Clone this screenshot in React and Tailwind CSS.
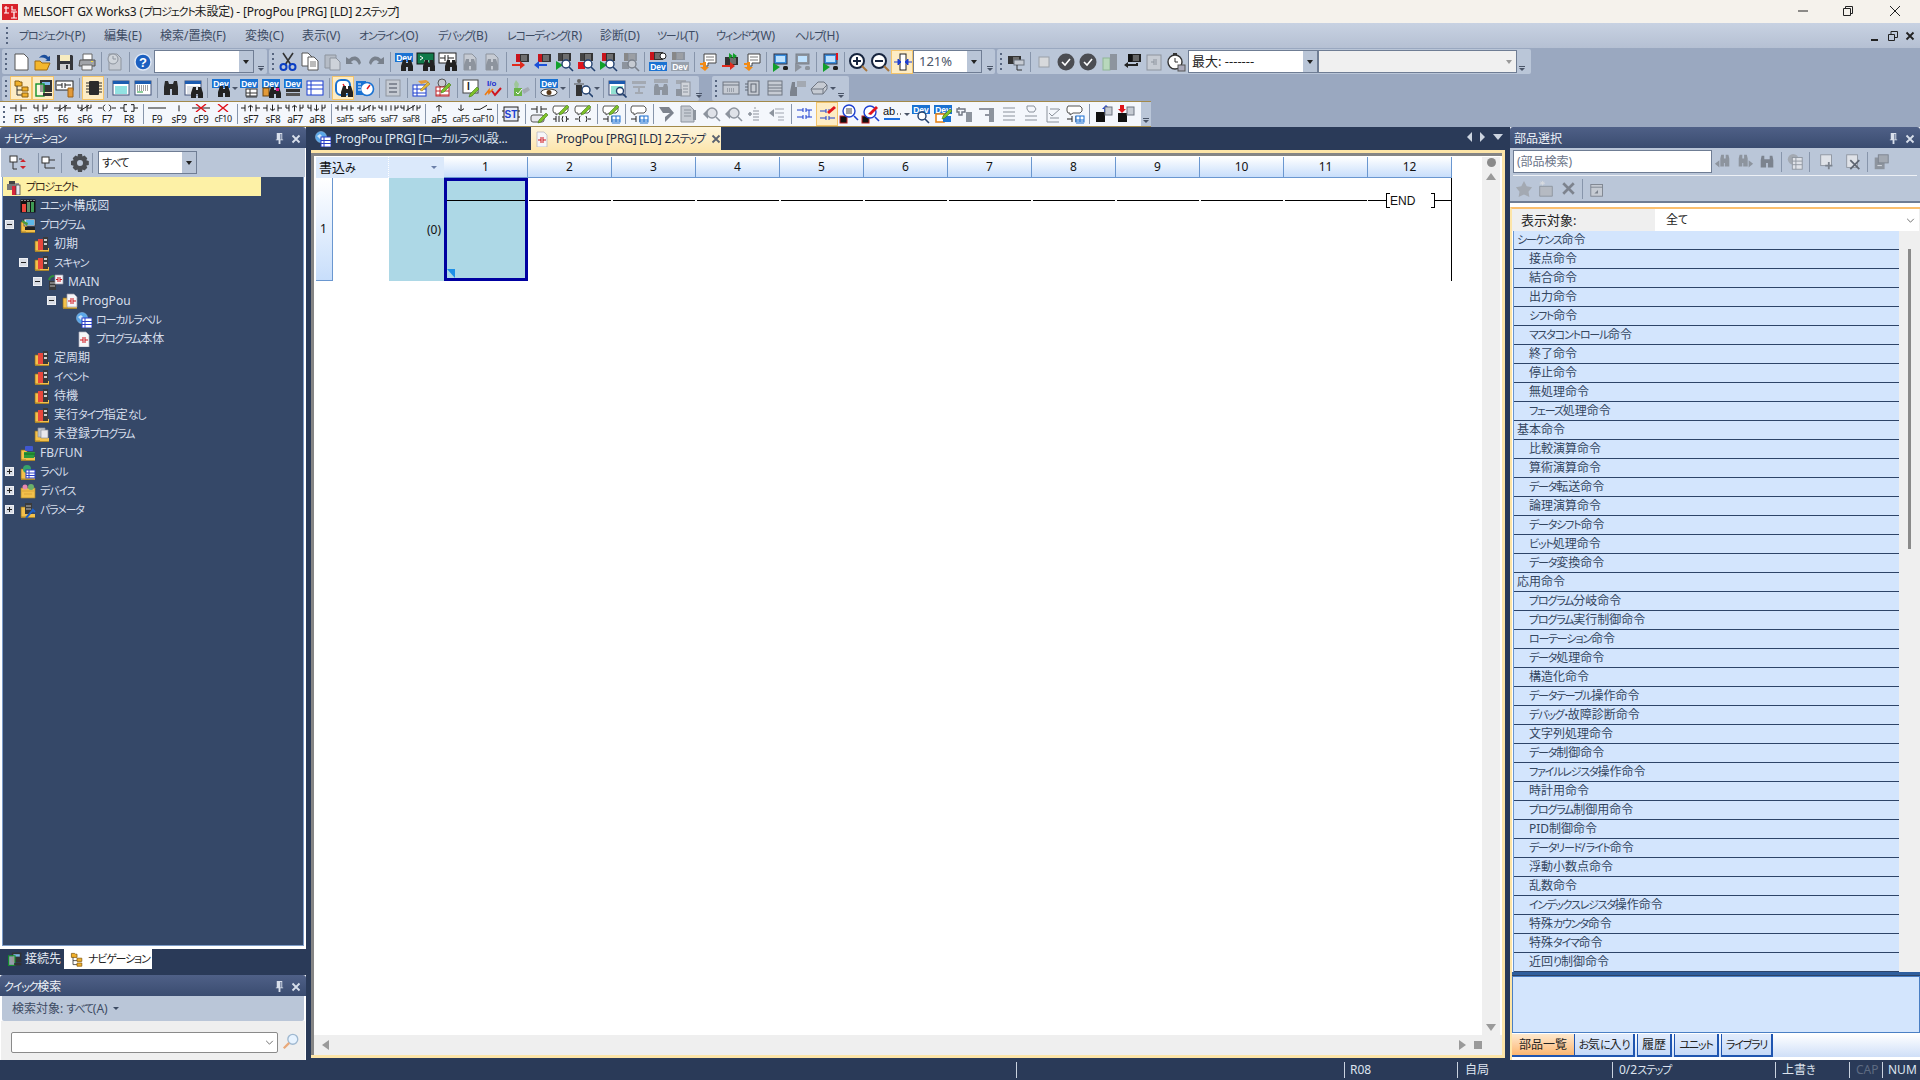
import React from "react";

const svgText = { fontFamily: "Liberation Sans, sans-serif", fontWeight: 700 };

// kana in the reference font is much narrower than in Noto, so squeeze those runs
const J = ({ children }) =>
  String(children)
    .split(/([\u3040-\u30ff]+)/)
    .map((p, i) =>
      i % 2 ? (
        <span key={i} className="text-[11px] tracking-[-1.2px]">
          {p}
        </span>
      ) : (
        p
      )
    );

// small building blocks for the 20x20 toolbar drawings
const Page = ({ x = 4, y = 2, w = 12, h = 16, s = "#555", f = "#fff" }) => (
  <path d={`M${x} ${y}h${w - 4}l4 4v${h - 4}h-${w}z`} fill={f} stroke={s} />
);
const Bino = ({ x = 0, y = 0, c = "#222" }) => (
  <g transform={`translate(${x} ${y})`}>
    <path d="M0 6L2 0h3v3h2V0h3l2 6v5H7V7H5v4H0z" fill={c} />
  </g>
);
const DevBox = ({ x = 1, y = 1, c = "#1a72d2", w = 18 }) => (
  <g>
    <rect x={x} y={y} width={w} height="9" fill={c} />
    <text x={x + w / 2} y={y + 7.5} fontSize="8.5" fill="#fff" textAnchor="middle" style={svgText}>Dev</text>
  </g>
);
const Rack = ({ x = 4, y = 2, c = "#c8141c", b = "#333" }) => (
  <g>
    <rect x={x} y={y} width="13" height="8" fill={b} />
    <rect x={x} y={y} width="4" height="8" fill={c} />
    <path d={`M${x + 6} ${y + 1}v6M${x + 8} ${y + 1}v6M${x + 10} ${y + 1}v6`} stroke="#aaa" />
  </g>
);
const Mag = ({ x = 11, y = 11, r = 4, s = "#22406e", f = "#fff" }) => (
  <g>
    <circle cx={x} cy={y} r={r} fill={f} stroke={s} strokeWidth="1.4" />
    <path d={`M${x + r - 1} ${y + r - 1}l4 4`} stroke={s} strokeWidth="1.6" />
  </g>
);
const ArrowR = ({ x = 2, y = 12, c = "#e02a1c" }) => (
  <path transform={`translate(${x} ${y})`} d="M0 1h8V-2l5 4-5 4V3H0z" fill={c} />
);
const ArrowL = ({ x = 2, y = 12, c = "#1a50d8" }) => (
  <path transform={`translate(${x} ${y})`} d="M13 1H5V-2L0 2l5 4V3h8z" fill={c} />
);
const PlayG = ({ x = 2, y = 10, c = "#12a02a" }) => <path d={`M${x} ${y}l7 4-7 5z`} fill={c} />;
const Win = ({ s = "#1c5cb0", lines = "#25c4c4" }) => (
  <g>
    <rect x="2" y="3" width="16" height="14" fill="#fff" stroke="#44557a" />
    <rect x="2" y="3" width="16" height="3" fill={s} />
    <path d="M4 9h12M4 11h12M4 13h12M4 15h12" stroke={lines} />
  </g>
);
const Monitor = ({ c = "#3a8fe0", s = "#334" }) => (
  <g>
    <rect x="4" y="2" width="13" height="10" fill={c} stroke={s} />
    <rect x="6" y="4" width="9" height="6" fill="#bfe2ff" />
  </g>
);
const Table = ({ x = 3, y = 4, w = 14, h = 12, c = "#1c3fd0" }) => (
  <g>
    <rect x={x} y={y} width={w} height={h} fill="#fff" stroke={c} />
    <path d={`M${x} ${y + 4}h${w}M${x} ${y + 8}h${w}M${x + 4} ${y}v${h}`} stroke={c} />
  </g>
);
const Pencil = ({ x = 8, y = 10 }) => (
  <path transform={`translate(${x} ${y})`} d="M0 6L7-1l2 2-7 7-3 1z" fill="#7fc12a" stroke="#3e7a12" strokeWidth=".6" />
);
const Bubble = ({ s = "#555" }) => <path d="M3 2h12l2 2v3l-2 2H8l-3 2V9H3L2 7V4z" fill="#fff" stroke={s} />;
const Contact = ({ y = 14, s = "#222" }) => (
  <path d={`M2 ${y}h5M7 ${y - 3}v6M11 ${y - 3}v6M11 ${y}h5`} stroke={s} fill="none" />
);
const GrayPage = () => <Page s="#8d949e" f="#c6cbd3" />;
const Dash = ({ s = "#8a919b" }) => <path d="M4 4h12M4 8h12M4 12h12M4 16h12" stroke={s} fill="none" />;

const icons = {
  new: <Page x={4} y={2} w={13} h={16} />,
  open: (
    <g>
      <path d="M2 9h5l2 2h8l-3 7H2z" fill="#f4b72e" stroke="#a06a10" />
      <path d="M6 6c3-4 7-4 9-1l2-1v5h-5l2-1c-1-2-4-3-8-2z" fill="#1c4f9c" />
    </g>
  ),
  save: (
    <g>
      <path d="M2 3h15l1 1v14H2z" fill="#35363a" />
      <rect x="5" y="3" width="10" height="6" fill="#f7ecc0" />
      <rect x="5" y="12" width="10" height="6" fill="#cfcfcf" />
      <rect x="11" y="13" width="2" height="4" fill="#35363a" />
    </g>
  ),
  print: (
    <g>
      <path d="M6 2h9v6H6z" fill="#fff" stroke="#666" />
      <path d="M3 8h15v6H2z" fill="#a2a4a8" stroke="#555" />
      <path d="M5 13h10v5H5z" fill="#f4f4f4" stroke="#666" />
      <rect x="14" y="9" width="2" height="1" fill="#f8e03a" />
    </g>
  ),
  clock: (
    <g>
      <GrayPage />
      <circle cx="8" cy="7" r="5" fill="#d0d5db" stroke="#8d949e" />
      <path d="M8 4v3h3" stroke="#8d949e" fill="none" />
    </g>
  ),
  help: (
    <g>
      <circle cx="10" cy="10" r="8" fill="#1b5fc0" stroke="#dfe8f5" strokeWidth="1.4" />
      <text x="10" y="14.5" fontSize="13" textAnchor="middle" fill="#fff" style={svgText}>?</text>
    </g>
  ),
  cut: (
    <g>
      <path d="M5 1l8 12M15 1L7 13" stroke="#333" strokeWidth="1.6" />
      <circle cx="5.5" cy="15" r="3" fill="none" stroke="#0b3fc4" strokeWidth="2" />
      <circle cx="14.5" cy="15" r="3" fill="none" stroke="#0b3fc4" strokeWidth="2" />
    </g>
  ),
  copy: (
    <g>
      <Page x={2} y={1} w={10} h={13} />
      <Page x={8} y={5} w={10} h={13} />
      <path d="M10 10h6M10 12h6M10 14h6" stroke="#777" />
    </g>
  ),
  paste: (
    <g>
      <path d="M3 3h11v13H3z" fill="#b5bcc6" stroke="#8d949e" />
      <Page x={8} y={6} w={10} h={12} s="#8d949e" f="#cdd2d9" />
    </g>
  ),
  undo: <path d="M2 5v7h7L7 10c3-3 6-2 8 3l2-2c-1-6-7-9-12-4z" fill="#79818c" />,
  redo: <path d="M18 5v7h-7l2-2c-3-3-6-2-8 3l-2-2c1-6 7-9 12-4z" fill="#79818c" />,
  devBino: (
    <g>
      <DevBox />
      <Bino x={7} y={8} />
    </g>
  ),
  termBino: (
    <g>
      <rect x="1" y="1" width="17" height="11" fill="#107a4a" stroke="#111" />
      <path d="M4 4l3 2-3 2M8 9h5" stroke="#fff" fill="none" />
      <Bino x={7} y={8} />
    </g>
  ),
  ladBino: (
    <g>
      <rect x="1" y="1" width="17" height="10" fill="#fff" stroke="#222" />
      <path d="M2 6h5M7 3v6M10 3v6M10 6h6" stroke="#222" />
      <Bino x={7} y={8} />
    </g>
  ),
  pageDis: (
    <g>
      <GrayPage />
      <Bino x={4} y={7} c="#8d949e" />
    </g>
  ),
  rackOut: (
    <g>
      <Rack x={6} y={2} />
      <ArrowR x={2} y={11} />
    </g>
  ),
  rackIn: (
    <g>
      <Rack x={6} y={2} />
      <ArrowL x={2} y={11} />
    </g>
  ),
  rackMagG: (
    <g>
      <Rack x={4} y={1} c="#444" />
      <PlayG x={2} y={9} />
      <Mag x={12} y={12} />
    </g>
  ),
  rackMagR: (
    <g>
      <Rack x={4} y={1} c="#444" />
      <rect x="2" y="10" width="7" height="7" fill="#e0141c" />
      <Mag x={12} y={12} />
    </g>
  ),
  rackMagP: (
    <g>
      <Rack x={4} y={1} />
      <PlayG x={2} y={9} />
      <Mag x={12} y={12} />
    </g>
  ),
  rackMagDis: (
    <g>
      <Rack x={4} y={1} c="#888" b="#8d949e" />
      <rect x="2" y="10" width="7" height="7" fill="#8d949e" />
      <Mag x={12} y={12} s="#7a818c" f="#c6cbd3" />
    </g>
  ),
  rackDev: (
    <g>
      <Rack x={2} y={0} />
      <circle cx="15" cy="4" r="3" fill="#fff" stroke="#222" />
      <DevBox y={10} />
    </g>
  ),
  rackDevDis: (
    <g>
      <Rack x={2} y={0} c="#888" b="#8d949e" />
      <DevBox y={10} c="#97a0ac" />
    </g>
  ),
  cmtArrow: (
    <g>
      <path d="M6 2h12v9H10v3H6z" fill="#fff" stroke="#444" />
      <path d="M8 5h8M8 8h8" stroke="#777" />
      <path d="M2 11h3v-1h3v5h3l-4 4-5-4h3v-2H2z" fill="#f28a14" />
    </g>
  ),
  redGreen: (
    <g>
      <Rack x={5} y={5} c="#333" />
      <path d="M9 1l4 3-4 3zM13 1l4 3-4 3z" fill="#12a02a" />
      <ArrowR x={2} y={12} />
    </g>
  ),
  monG: (
    <g>
      <Monitor />
      <PlayG x={3} y={11} />
      <rect x="13" y="14" width="5" height="4" rx="1.5" fill="#222" />
    </g>
  ),
  monDis: (
    <g>
      <Monitor c="#8d949e" s="#7a818c" />
      <PlayG x={3} y={11} c="#8d949e" />
      <rect x="13" y="14" width="5" height="4" rx="1.5" fill="#8d949e" />
    </g>
  ),
  monV: (
    <g>
      <Monitor />
      <path d="M16 1v7h2V1z" fill="#e0141c" />
      <PlayG x={3} y={11} />
      <rect x="13" y="14" width="5" height="4" rx="1.5" fill="#222" />
    </g>
  ),
  zoomIn: (
    <g>
      <circle cx="9" cy="9" r="7" fill="#fff" stroke="#16243e" strokeWidth="2" />
      <path d="M5 9h8M9 5v8" stroke="#16243e" strokeWidth="2" />
      <path d="M14 14l5 5" stroke="#a8763e" strokeWidth="2" />
    </g>
  ),
  zoomOut: (
    <g>
      <circle cx="9" cy="9" r="7" fill="#fff" stroke="#16243e" strokeWidth="2" />
      <path d="M5 9h8" stroke="#16243e" strokeWidth="2" />
      <path d="M14 14l5 5" stroke="#a8763e" strokeWidth="2" />
    </g>
  ),
  fit: (
    <g>
      <rect x="7" y="2" width="6" height="16" fill="#fff" stroke="#222" />
      <path d="M1 10h4M5 7v6l3-3zM19 10h-4M15 7v6l-3-3z" fill="#1c3fd0" stroke="#1c3fd0" />
    </g>
  ),
  rackLine: (
    <g>
      <Rack x={2} y={4} c="#333" />
      <rect x="8" y="8" width="10" height="5" fill="#c6cbd3" stroke="#6c7480" />
      <path d="M11 13v5h5" stroke="#333" fill="none" />
    </g>
  ),
  square: <rect x="5" y="5" width="10" height="10" fill="#d7d9dc" stroke="#9aa0a8" />,
  check: (
    <g>
      <circle cx="10" cy="10" r="8.5" fill="#4b4d52" />
      <path d="M6 10l3 3 5-6" stroke="#fff" strokeWidth="1.6" fill="none" />
    </g>
  ),
  greenRack: (
    <g>
      <rect x="3" y="6" width="7" height="12" fill="#b8d8bc" stroke="#8fb596" />
      <rect x="10" y="2" width="7" height="16" fill="#8d949e" />
    </g>
  ),
  rackBack: (
    <g>
      <Rack x={6} y={2} c="#111" b="#222" />
      <path d="M16 11v3H6v2L2 13l4-3v2h8v-1z" fill="#222" />
    </g>
  ),
  disPlc: (
    <g>
      <rect x="3" y="3" width="14" height="15" fill="#c6cbd3" stroke="#8d949e" />
      <path d="M7 10h3M10 7v6M12 7v6" stroke="#8d949e" />
    </g>
  ),
  clockX: (
    <g>
      <circle cx="9" cy="10" r="7" fill="#fff" stroke="#333" strokeWidth="1.4" />
      <rect x="7" y="1" width="4" height="2" fill="#333" />
      <path d="M9 6v4h3" stroke="#333" fill="none" />
      <rect x="12" y="13" width="7" height="6" fill="#aab" stroke="#555" />
    </g>
  ),
  tree: (
    <g>
      <path d="M3 3h4l1 1h2v4H3z" fill="#f1b12a" stroke="#8a5e10" />
      <path d="M5 8v9h5M5 12h5" stroke="#333" fill="none" />
      <path d="M10 9h6v4h-6zM10 15h6v4h-6z" fill="#f1b12a" stroke="#8a5e10" />
    </g>
  ),
  pcUnit: (
    <g>
      <rect x="6" y="2" width="12" height="12" fill="#333" />
      <rect x="8" y="4" width="8" height="3" fill="#7db7e8" />
      <rect x="2" y="6" width="8" height="12" fill="#fff" fillOpacity=".5" stroke="#12902a" strokeWidth="1.4" />
      <rect x="9" y="15" width="9" height="3" fill="#333" />
    </g>
  ),
  ladTag: (
    <g>
      <rect x="1" y="3" width="17" height="9" fill="#fff" stroke="#222" />
      <path d="M2 7h5M7 5v5M10 5v5M10 7h6" stroke="#222" />
      <path d="M13 10h5v9h-5z" fill="#e39a38" stroke="#9b631b" />
    </g>
  ),
  chip: (
    <g>
      <rect x="5" y="3" width="10" height="14" rx="1" fill="#2b2b2b" />
      <path d="M2 5h3M2 8h3M2 11h3M2 14h3M15 5h3M15 8h3M15 11h3M15 14h3" stroke="#2b2b2b" />
    </g>
  ),
  win1: <Win />,
  win2: (
    <g>
      <rect x="2" y="3" width="16" height="14" fill="#fff" stroke="#44557a" />
      <rect x="2" y="3" width="16" height="3" fill="#1c5cb0" />
      <path d="M4 8h12M4 10h12M4 12h12" stroke="#444" strokeDasharray="1 1" />
      <path d="M4 14h6" stroke="#1a9a3a" />
    </g>
  ),
  bino: <path d="M3 9l1-6h3l1 3h4l1-3h3l1 6v8h-6v-6H9v6H3z" fill="#2a2a2a" />,
  winBino: (
    <g>
      <Win lines="#b8c0cc" />
      <Bino x={8} y={9} />
    </g>
  ),
  devTable: (
    <g>
      <DevBox />
      <Table x={7} y={11} w={11} h={7} c="#333" />
    </g>
  ),
  devRack: (
    <g>
      <DevBox />
      <rect x="2" y="10" width="6" height="8" fill="#e39a38" stroke="#6a4410" />
      <Bino x={8} y={9} />
      <rect x="15" y="10" width="3" height="3" fill="#e0188a" />
    </g>
  ),
  devNet: (
    <g>
      <DevBox />
      <rect x="3" y="11" width="14" height="3" fill="#333" />
      <rect x="3" y="15" width="14" height="3" fill="#555" />
    </g>
  ),
  table: <Table x={2} y={3} w={16} h={14} />,
  gaugeBino: (
    <g>
      <rect x="2" y="2" width="14" height="15" rx="5" fill="#fff" stroke="#1a72d2" strokeWidth="2" />
      <path d="M9 6l3 5" stroke="#e0141c" strokeWidth="1.4" />
      <Bino x={7} y={8} />
    </g>
  ),
  gauge: (
    <g>
      <rect x="1" y="3" width="10" height="14" fill="#1a72d2" />
      <circle cx="12" cy="11" r="6.5" fill="#fff" stroke="#1a72d2" strokeWidth="1.6" />
      <path d="M12 11l3-4" stroke="#e0141c" strokeWidth="1.4" />
      <path d="M3 6h3M3 9h3M3 12h3" stroke="#fff" />
    </g>
  ),
  listDis: (
    <g>
      <rect x="3" y="2" width="14" height="16" fill="#c6cbd3" stroke="#8d949e" />
      <path d="M6 6h8M6 10h8M6 14h8" stroke="#6f7682" strokeWidth="1.4" />
    </g>
  ),
  folderEdit: (
    <g>
      <path d="M7 3l8-1 3 2-8 2z" fill="#e39a38" />
      <Table x={2} y={7} w={13} h={11} />
      <path d="M9 12l8-8 2 2-8 7z" fill="#e3b63a" stroke="#8a6a10" strokeWidth=".5" />
    </g>
  ),
  listPencil: (
    <g>
      <circle cx="9" cy="5" r="4" fill="#c6cbd3" stroke="#555" />
      <Table x={3} y={9} w={13} h={9} c="#c0282c" />
      <Pencil x={9} y={6} />
    </g>
  ),
  iPencil: (
    <g>
      <rect x="2" y="2" width="15" height="13" fill="#fff" stroke="#444" />
      <text x="6" y="12" fontSize="10" fill="#222" style={svgText}>I</text>
      <Pencil x={9} y={10} />
    </g>
  ),
  ioCheck: (
    <g>
      <text x="4" y="8" fontSize="8" fill="#1c2fd0" style={svgText}>I/o</text>
      <path d="M2 17l4-5v3l4-4" stroke="#ef7a10" strokeWidth="1.6" fill="none" />
      <path d="M9 13l3 4 6-7" stroke="#d0141c" strokeWidth="2" fill="none" />
    </g>
  ),
  toolOk: (
    <g>
      <path d="M5 2l3 4-1 4h-3L3 6z" fill="#9fc69a" />
      <path d="M3 10h8v8H3z" fill="#6ab34a" />
      <path d="M5 14l2 2 4-5" stroke="#fff" fill="none" />
      <path d="M11 12l6-3 2 3-6 4z" fill="#a3a9b2" />
    </g>
  ),
  devEye: (
    <g>
      <DevBox />
      <ellipse cx="10" cy="14.5" rx="8" ry="3.5" fill="#fff" stroke="#333" />
      <circle cx="10" cy="14.5" r="2.5" fill="#5a3a1a" />
    </g>
  ),
  tower: (
    <g>
      <circle cx="6" cy="3" r="2" fill="#666" />
      <rect x="3" y="7" width="6" height="11" fill="#333" />
      <path d="M1 6h10" stroke="#555" />
      <Mag x={13} y={12} />
    </g>
  ),
  winMag: (
    <g>
      <Win lines="#25c4a4" />
      <Mag x={13} y={13} r={3.5} />
    </g>
  ),
  gPlc: (
    <g>
      <rect x="3" y="3" width="14" height="3" fill="#a3a9b2" />
      <path d="M4 9h12M10 9v6M6 15h8" stroke="#a3a9b2" strokeWidth="2" />
    </g>
  ),
  gBino: (
    <g>
      <rect x="3" y="1" width="14" height="4" fill="#a3a9b2" />
      <path d="M3 9l1-3h3l1 3h4l1-3h3l1 3v8h-6v-5H9v5H3z" fill="#8d949e" />
    </g>
  ),
  gMem: (
    <g>
      <rect x="3" y="2" width="10" height="4" fill="#a3a9b2" />
      <rect x="8" y="4" width="9" height="14" fill="#d0d4da" stroke="#8d949e" />
      <rect x="3" y="11" width="6" height="7" fill="#8d949e" />
      <path d="M10 8h5M10 11h5M10 14h5" stroke="#8d949e" />
    </g>
  ),
  gWin: (
    <g>
      <rect x="2" y="4" width="16" height="12" fill="#c6cbd3" stroke="#6f7682" />
      <path d="M2 7h16" stroke="#6f7682" />
      <path d="M6 11h8M6 13h8" stroke="#6f7682" strokeDasharray="1 1" />
    </g>
  ),
  gChip: (
    <g>
      <rect x="5" y="3" width="11" height="14" fill="#c6cbd3" stroke="#5f6672" />
      <rect x="8" y="6" width="5" height="8" fill="none" stroke="#5f6672" />
      <path d="M2 6h3M2 9h3M2 12h3" stroke="#5f6672" />
    </g>
  ),
  gTable: (
    <g>
      <rect x="3" y="3" width="14" height="14" fill="#c6cbd3" stroke="#6f7682" />
      <path d="M3 7h14M3 10h14M3 13h14" stroke="#6f7682" />
    </g>
  ),
  gBinoRack: (
    <g>
      <rect x="10" y="3" width="9" height="6" fill="#a3a9b2" />
      <path d="M4 9l1-5h3v5h2v9H3v-4z" fill="#7c838e" />
    </g>
  ),
  gEraser: (
    <g>
      <path d="M2 11l7-7h6l3 3v4l-4 5H4z" fill="#c6cbd3" stroke="#6f7682" />
      <path d="M2 11h12l4-4M14 11v5" stroke="#6f7682" fill="none" />
    </g>
  ),
  gStamp: <path d="M2 3h10l5 6-9 9v-5l5-4H6z" fill="#7d838e" />,
  gDoc: (
    <g>
      <Page x={2} y={2} w={13} h={16} s="#8d949e" f="#c6cbd3" />
      <path d="M5 6h7M5 9h7M5 12h7" stroke="#8d949e" />
      <rect x="14" y="6" width="3" height="10" fill="#8d949e" />
    </g>
  ),
  gMag: (
    <g>
      <path d="M2 10l5-5v10z" fill="#8d949e" />
      <Mag x={11} y={9} r={5} s="#8d949e" f="#dfe2e8" />
    </g>
  ),
  gIns: (
    <g>
      <path d="M3 10h4M5 8v4" stroke="#8d949e" strokeWidth="1.6" />
      <path d="M10 3v2M8 7h6M8 10h6M8 13h6M8 16h6" stroke="#b0b5bd" strokeWidth="1.4" />
    </g>
  ),
  gDel: (
    <g>
      <path d="M2 9l5-4v8z" fill="#8d949e" />
      <path d="M8 5h9M8 9h9M11 13h6M11 16h6" stroke="#a0a6af" strokeWidth="1.2" />
    </g>
  ),
  ladGrid: <path d="M2 6h6M8 4v4M11 4v4M11 6h6M2 13h6M8 11v4M11 11v4M11 13h6M14 6v7" stroke="#1c3fd0" fill="none" />,
  ladGridPen: (
    <g>
      <path d="M2 7h6M8 5v4M11 5v4M2 14h6M8 12v4M11 12v4M11 14h6" stroke="#1c3fd0" fill="none" />
      <path d="M9 8l7-6 2 2-7 6z" fill="#e0141c" />
    </g>
  ),
  magDoc: (
    <g>
      <rect x="1" y="12" width="7" height="7" fill="#111" stroke="#c02020" />
      <Mag x={10} y={7} r={6} s="#1c3fd0" />
      <path d="M7 5h6M7 7h6M7 9h6" stroke="#444" />
    </g>
  ),
  magPen: (
    <g>
      <rect x="1" y="12" width="7" height="7" fill="#111" stroke="#c02020" />
      <Mag x={9} y={8} r={6} s="#1c3fd0" />
      <path d="M7 10l8-8 2 2-7 7z" fill="#e0141c" />
    </g>
  ),
  abUnder: (
    <g>
      <text x="0" y="11" fontSize="11" fill="#111" style={{ ...svgText, fontWeight: 400 }}>ab</text>
      <path d="M14 10h1M17 10h1" stroke="#111" />
      <path d="M1 15h16" stroke="#1c6fe0" strokeWidth="2" />
    </g>
  ),
  devMag: (
    <g>
      <DevBox />
      <Mag x={11} y={12} />
    </g>
  ),
  devArrow: (
    <g>
      <DevBox />
      <rect x="3" y="10" width="8" height="8" fill="#fff" stroke="#e8861a" strokeWidth="1.6" />
      <rect x="10" y="12" width="8" height="6" fill="#1a72d2" />
      <Pencil x={10} y={6} />
    </g>
  ),
  gPlus: (
    <g>
      <path d="M4 3v2M2 5h8v3H7v3H4V8H2z" fill="none" stroke="#6f7682" strokeWidth="1.4" />
      <rect x="11" y="8" width="6" height="10" fill="#8d949e" />
    </g>
  ),
  gMinus: (
    <g>
      <path d="M2 5h10M8 11h4" stroke="#6f7682" strokeWidth="1.6" />
      <rect x="12" y="4" width="5" height="14" fill="#8d949e" />
    </g>
  ),
  gLines: <Dash />,
  gBub: (
    <g>
      <path d="M6 2h7l2 3-2 3H8l-2-3z" fill="none" stroke="#8a919b" />
      <path d="M4 12h12M4 16h12" stroke="#8a919b" />
    </g>
  ),
  gCheck: (
    <g>
      <path d="M4 2v16h12" stroke="#8a919b" fill="none" />
      <path d="M7 5h9M7 14h9" stroke="#8a919b" />
      <path d="M6 9l3 3 8-7" stroke="#8a919b" fill="none" />
    </g>
  ),
  cmtLad: (
    <g>
      <Bubble />
      <Contact y={15} />
      <Table x={11} y={12} w={8} h={6} c="#1a6fd0" />
    </g>
  ),
  rackUp: (
    <g>
      <path d="M9 5l4-4 4 4h-2v4h-4V5z" fill="#1c3fd0" />
      <rect x="3" y="8" width="9" height="10" fill="#111" />
      <rect x="12" y="3" width="7" height="8" fill="#c6cbd3" stroke="#6f7682" />
    </g>
  ),
  rackDown: (
    <g>
      <path d="M9 1v4h2l-4 4-4-4h2V1z" fill="#e0141c" />
      <rect x="3" y="9" width="9" height="9" fill="#111" />
      <rect x="12" y="3" width="7" height="8" fill="#c6cbd3" stroke="#6f7682" />
    </g>
  ),
  padEdit: (
    <g>
      <path d="M2 5h6M8 2v7M12 2v7M12 5h6" stroke="#222" fill="none" />
      <rect x="2" y="11" width="13" height="7" rx="2" fill="#e8e8ee" stroke="#555" />
      <Pencil x={10} y={10} />
    </g>
  ),
  cmtPenA: (
    <g>
      <Bubble />
      <Pencil x={9} y={2} />
      <path d="M2 15h3M5 12v6M8 12v6M12 12q-2 3 0 6M15 12q2 3 0 6M15 15h3" stroke="#222" fill="none" />
    </g>
  ),
  cmtPenB: (
    <g>
      <Bubble />
      <Pencil x={9} y={2} />
      <path d="M2 15h3M7 12q-2 3 0 6M13 12q2 3 0 6M15 15h3" stroke="#222" fill="none" />
    </g>
  ),
  cmtPenT: (
    <g>
      <Bubble />
      <Pencil x={9} y={2} />
      <Contact y={15} />
      <Table x={11} y={12} w={8} h={6} c="#1a6fd0" />
    </g>
  ),
  st: (
    <g>
      <rect x="3" y="3" width="14" height="14" fill="#e6eaf4" stroke="#222" />
      <path d="M1 7h2M1 13h2M17 7h2M17 13h2" stroke="#222" />
      <text x="10" y="14" fontSize="10" fill="#1c3fd0" textAnchor="middle" style={svgText}>ST</text>
    </g>
  ),
  // parts panel, all greyed out
  pBinoL: (
    <g>
      <path d="M7 6l1-4h3v4h2V2h3l1 4v9h-5v-4h-1v4H7z" fill="#8d949e" />
      <path d="M1 12l5-4v8z" fill="#8d949e" />
    </g>
  ),
  pBinoR: (
    <g>
      <path d="M3 6l1-4h3v4h2V2h3l1 4v9H8v-4H7v4H3z" fill="#8d949e" />
      <path d="M19 12l-5-4v8z" fill="#8d949e" />
    </g>
  ),
  pBino: <path d="M3 8l1-5h3v4h6V3h3l1 5v8h-6v-5H9v5H3z" fill="#7c838e" />,
  pGlobe: (
    <g>
      <circle cx="8" cy="7" r="6" fill="#a3a9b2" />
      <rect x="7" y="5" width="11" height="13" fill="#dfe2e8" stroke="#8d949e" />
      <path d="M7 9h11M7 13h11M11 5v13" stroke="#8d949e" />
    </g>
  ),
  pAdd: (
    <g>
      <rect x="3" y="2" width="12" height="12" fill="#dfe2e8" stroke="#8d949e" />
      <path d="M12 10v8M8 14h8" stroke="#7c838e" strokeWidth="2" />
    </g>
  ),
  pDel: (
    <g>
      <rect x="3" y="2" width="12" height="14" fill="#dfe2e8" stroke="#8d949e" />
      <path d="M7 8l10 10M17 8L7 18" stroke="#5f6672" strokeWidth="2" />
    </g>
  ),
  pCopy: (
    <g>
      <rect x="3" y="5" width="11" height="13" fill="#8d949e" />
      <rect x="7" y="2" width="11" height="9" fill="#a3a9b2" stroke="#7c838e" />
      <path d="M6 14h5" stroke="#dfe2e8" />
    </g>
  ),
  pStar: <path d="M10 1l3 6 6 1-4 5 1 6-6-3-6 3 1-6-4-5 6-1z" fill="#a3a9b2" />,
  pFolder: (
    <g>
      <path d="M3 7h14v11H3z" fill="#b5bac2" stroke="#8d949e" />
      <path d="M6 1v5M3 3.500h6M4 2l4 3M8 2L4 5" stroke="#d8dbe0" />
    </g>
  ),
  pWin: (
    <g>
      <rect x="2" y="5" width="13" height="13" fill="#c6cbd3" stroke="#7c838e" />
      <path d="M2 8h13" stroke="#7c838e" />
      <path d="M6 15l4-4v4z" fill="#7c838e" />
    </g>
  )
};

const Ic = ({ k, size = 20 }) => (
  <svg viewBox="0 0 20 20" width={size} height={size} className="block shrink-0">
    {icons[k]}
  </svg>
);

const Grip = () => (
  <div className="w-[8px] shrink-0 flex flex-col items-center gap-[3px]">
    <i className="w-[2px] h-[2px] bg-[#56657f]" />
    <i className="w-[2px] h-[2px] bg-[#56657f]" />
    <i className="w-[2px] h-[2px] bg-[#56657f]" />
    <i className="w-[2px] h-[2px] bg-[#56657f]" />
  </div>
);

const Sep = () => (
  <div className="w-[6px] h-[20px] shrink-0 flex justify-center">
    <i className="w-[1px] h-full bg-[#8795ab]" />
  </div>
);

const Tool = ({ name }) => {
  if (name === "|") return <Sep />;
  const box = name[0] === "*";
  const drop = name[name.length - 1] === ">";
  const k = name.replace("*", "").replace(">", "");
  return (
    <div
      className={`${drop ? "w-[28px]" : "w-[22px]"} h-[24px] shrink-0 flex items-center justify-start pl-[1px] ${
        box ? "bg-[#fdecc4] border border-[#f3c46b]" : ""
      }`}
    >
      <Ic k={k} />
      {drop && <span className="ml-[1px] border-x-[3px] border-t-[3px] border-x-transparent border-t-[#4a5568]" />}
    </div>
  );
};

const Overflow = () => (
  <div className="w-[10px] self-stretch shrink-0 flex flex-col justify-end items-center pb-[3px]">
    <i className="w-[6px] h-[1px] bg-[#4a5568] mb-[1px]" />
    <span className="border-x-[3px] border-t-[3px] border-x-transparent border-t-[#4a5568]" />
  </div>
);

const Combo = ({ w, children, disabled }) => (
  <div
    className={`${w} h-[23px] shrink-0 flex items-center border border-[#6f7d94] pl-[3px] text-[13px] text-[#222] ${
      disabled ? "bg-[#f0f0f0]" : "bg-white"
    }`}
  >
    <span className="flex-1 whitespace-nowrap">{children}</span>
    <span className={`w-[14px] h-full flex items-center justify-center ${disabled ? "" : "bg-[#b9c5d7]"}`}>
      <span className={`border-x-[3px] border-t-[4px] border-x-transparent ${disabled ? "border-t-[#999]" : "border-t-[#222]"}`} />
    </span>
  </div>
);

const Bar = ({ tools, className, children, end }) => (
  <div className={`h-[25px] flex items-center bg-[#bac6d8] rounded-[2px] ${className}`}>
    <Grip />
    {tools.map((t, i) => (
      <Tool key={i} name={t} />
    ))}
    {children}
    {end}
  </div>
);

// ladder keys of the third toolbar row
const Wires = {
  c: "M2 6h6M8 1v10M13 1v10M13 6h6",
  n: "M4 1v5h4M8 1v10M13 1v10M13 6h4V1",
  cd: "M2 6h6M8 1v10M13 1v10M13 6h6M6 10l9-8",
  nd: "M4 1v5h4M8 1v10M13 1v10M13 6h4V1M6 10l9-8",
  coil: "M2 6h4M9 1Q5 6 9 11M13 1Q17 6 13 11M16 6h4",
  fn: "M2 6h4M9 1H6v10h3M13 1h3v10h-3M16 6h4",
  h: "M2 6h18",
  v: "M11 2v9",
  ru: "M1 6h4M5 1v10M16 1v10M16 6h4M10.5 11V2M8 5l2.5-3L13 5",
  rd: "M1 6h4M5 1v10M16 1v10M16 6h4M10.5 1v9M8 7l2.5 3L13 7",
  nu: "M2 1v5h3M5 1v10M16 1v10M16 6h3V1M10.5 11V2M8 5l2.5-3L13 5",
  nd2: "M2 1v5h3M5 1v10M16 1v10M16 6h3V1M10.5 1v9M8 7l2.5 3L13 7",
  pp: "M1 6h3M4 2v8M8 2v8M13 2v8M17 2v8M17 6h3M8 6h5",
  ppd: "M1 6h3M4 2v8M8 2v8M13 2v8M17 2v8M17 6h3M6 10l9-8",
  pn: "M1 2v4h3M4 2v8M8 2v8M13 2v8M17 2v8M17 6h3V2",
  pnd: "M1 2v4h3M4 2v8M8 2v8M13 2v8M17 2v8M17 6h3V2M6 10l9-8",
  up: "M11 11V2M8 5l3-3 3 3",
  dn: "M11 1v9M8 7l3 3 3-3",
  diag: "M2 8h6l7-6M15 8h5"
};

const Key = ({ d, label, x }) => (
  <div className="w-[22px] shrink-0 flex flex-col items-center gap-[2px]">
    <svg viewBox="0 0 22 12" width="22" height="8" preserveAspectRatio="none" className="block">
      <path d={d} stroke="#1c1c1c" fill="none" vectorEffect="non-scaling-stroke" />
      {x && <path d="M6 0l10 12M16 0L6 12" stroke="#e0141c" strokeWidth="1.4" vectorEffect="non-scaling-stroke" />}
    </svg>
    <span
      className={`leading-[10px] text-[#222] whitespace-nowrap ${
        label.length > 3 ? "text-[9px] tracking-[-.6px]" : "text-[10px] tracking-[-.3px]"
      }`}
    >
      {label}
    </span>
  </div>
);

const KeyGroup = ({ keys }) => keys.map(([w, label, x]) => <Key key={label} d={Wires[w]} label={label} x={x} />);

const menus = [
  ["プロジェクト(P)", "w-[67px] ml-[19px]"],
  ["編集(E)", "w-[37px] ml-[18px]"],
  ["検索/置換(F)", "w-[66px] ml-[19px]"],
  ["変換(C)", "w-[38px] ml-[19px]"],
  ["表示(V)", "w-[38px] ml-[19px]"],
  ["オンライン(O)", "w-[61px] ml-[19px]"],
  ["デバッグ(B)", "w-[51px] ml-[18px]"],
  ["レコーディング(R)", "w-[73px] ml-[18px]"],
  ["診断(D)", "w-[38px] ml-[20px]"],
  ["ツール(T)", "w-[40px] ml-[19px]"],
  ["ウィンドウ(W)", "w-[60px] ml-[19px]"],
  ["ヘルプ(H)", "w-[45px] ml-[19px]"]
];

const Pin = () => (
  <svg viewBox="0 0 12 14" width="11" height="13" className="block">
    <path d="M3 1h6v7h1v1H7v4H5V9H2V8h1zM7 2v6h1V2z" fill="#d8dfeb" fillRule="evenodd" />
  </svg>
);
const CloseX = ({ c = "#d8dfeb", size = 10 }) => (
  <svg viewBox="0 0 10 10" width={size} height={size} className="block">
    <path d="M1.5 1.5l7 7M8.5 1.5l-7 7" stroke={c} strokeWidth="1.8" />
  </svg>
);

const PanelTitle = ({ children }) => (
  <div className="h-[21px] shrink-0 flex items-center pl-[4px] pr-[5px] pt-[2px] rounded-t-[3px] bg-gradient-to-b from-[#4f6087] to-[#3a4c70] text-[#eef2f8]">
    <span className="flex-1 whitespace-nowrap">
      <J>{children}</J>
    </span>
    <span className="mr-[6px]">
      <Pin />
    </span>
    <CloseX />
  </div>
);

// tree icons, 16x16
const Fold = ({ children }) => (
  <svg viewBox="0 0 16 16" width="16" height="16" className="block shrink-0">
    <path d="M1 5h6v10H1z" fill="#f3c04a" stroke="#8a6a1c" strokeWidth=".7" />
    <path d="M1 15h14v1H1z" fill="#a8842c" />
    <path d="M6 12h9v3H6z" fill="#f3c04a" />
    {children}
  </svg>
);
const Task = () => (
  <Fold>
    <rect x="4" y="3" width="5" height="11" fill="#e8473c" />
    <rect x="9" y="1" width="5" height="13" fill="#3a3a3a" />
    <rect x="10" y="3" width="3" height="2" fill="#cfcfcf" />
    <rect x="10" y="7" width="3" height="2" fill="#cfcfcf" />
  </Fold>
);
const LadPage = () => (
  <g>
    <path d="M5 1h7l3 3v10H5z" fill="#f4f4f8" stroke="#9a9aa8" strokeWidth=".7" />
    <path d="M6 8h3M9 5v6M11 5v6M11 8h3" stroke="#d0141c" fill="none" />
  </g>
);
const treeIcons = {
  project: (
    <svg viewBox="0 0 16 16" width="16" height="16" className="block shrink-0">
      <path d="M3 2h6v6H3z" fill="#444" />
      <path d="M1 5h8v6H1z" fill="#777" />
      <rect x="9" y="4" width="4" height="3" fill="#9a9a9a" />
      <rect x="6" y="7" width="4" height="9" fill="#d8283c" />
      <rect x="10" y="6" width="4" height="10" fill="#e8e8ee" stroke="#333" strokeWidth=".7" />
    </svg>
  ),
  unit: (
    <svg viewBox="0 0 16 16" width="16" height="16" className="block shrink-0">
      <rect x=".5" y="1.5" width="15" height="13" fill="#111" />
      <path d="M2 2v1M5 2v1M8 2v1M11 2v1M14 2v1" stroke="#fff" />
      <rect x="2" y="6" width="4" height="8" fill="#e8473c" />
      <rect x="7" y="4" width="3" height="10" fill="#5d8e6a" />
      <rect x="11" y="4" width="3" height="10" fill="#3f9a54" />
    </svg>
  ),
  program: (
    <Fold>
      <rect x="4" y="2" width="11" height="7" fill="#d8dfeb" stroke="#333" strokeWidth=".7" />
      <rect x="6" y="3" width="8" height="5" fill="#5db7e8" />
      <path d="M2 3l6 3-1 3-5-4z" fill="#4a9a3a" />
      <rect x="5" y="10" width="10" height="3" fill="#222" />
    </Fold>
  ),
  task: <Task />,
  main: (
    <svg viewBox="0 0 16 16" width="16" height="16" className="block shrink-0">
      <rect x="1" y="7" width="7" height="9" fill="#3a3a3a" />
      <path d="M2 9h5M2 12h5" stroke="#bbb" />
      <path d="M1 6q1-4 5-4" stroke="#2f8f3a" strokeWidth="2" fill="none" />
      <path d="M7 1h8v9H7z" fill="#f4f4f8" stroke="#9a9aa8" strokeWidth=".7" />
      <path d="M8 5.500h2M10 3v5M12 3v5M12 5.500h2" stroke="#d0141c" fill="none" />
    </svg>
  ),
  pou: (
    <Fold>
      <LadPage />
    </Fold>
  ),
  local: (
    <svg viewBox="0 0 16 16" width="16" height="16" className="block shrink-0">
      <circle cx="6" cy="6" r="5.500" fill="#5aa7e8" stroke="#8bb9e4" strokeWidth=".6" />
      <path d="M2 5l3-2 2 2-2 3z" fill="#cde6fb" />
      <rect x="6" y="6" width="10" height="10" fill="#fff" stroke="#2a3fc8" />
      <path d="M6 9.500h10M6 12.500h10M9 6v10" stroke="#2a3fc8" />
    </svg>
  ),
  doc: (
    <svg viewBox="0 0 16 16" width="16" height="16" className="block shrink-0">
      <path d="M3 1h7l3 3v12H3z" fill="#f6f6f9" stroke="#b0b0bb" strokeWidth=".7" />
      <path d="M4 9h3M7 6v6M9 6v6M9 9h3" stroke="#d0141c" fill="none" />
    </svg>
  ),
  unreg: (
    <Fold>
      <path d="M4 2h7v9H4z" fill="#bfc3cb" stroke="#8d949e" strokeWidth=".7" />
      <path d="M7 4h7v8H7z" fill="#e8e8ec" stroke="#8d949e" strokeWidth=".7" />
    </Fold>
  ),
  fb: (
    <Fold>
      <rect x="5" y="1" width="8" height="5" rx="1" fill="#3f57d0" />
      <path d="M4 7h11l-1 6H4z" fill="#2c9a3c" />
      <path d="M4 9h11" stroke="#136f22" />
    </Fold>
  ),
  label: (
    <Fold>
      <circle cx="7" cy="5" r="4" fill="#35a36a" />
      <rect x="6" y="6" width="9" height="8" fill="#fff" stroke="#2a3fc8" />
      <path d="M6 9h9M6 11.500h9M9 6v8" stroke="#2a3fc8" />
    </Fold>
  ),
  device: (
    <svg viewBox="0 0 16 16" width="16" height="16" className="block shrink-0">
      <path d="M1 5h14v10H1z" fill="#f3c04a" stroke="#a8842c" strokeWidth=".7" />
      <circle cx="5" cy="4" r="2.500" fill="#e88ab0" />
      <circle cx="11" cy="4" r="3" fill="#6ab06a" />
      <path d="M2 8h12M4 11h8" stroke="#d9a43a" />
    </svg>
  ),
  param: (
    <Fold>
      <rect x="5" y="1" width="7" height="11" fill="#3a3a3a" />
      <path d="M6 4h5M6 7h5" stroke="#bbb" />
      <path d="M6 16l7-8M12 7l3 3" stroke="#1d5fc8" strokeWidth="2" />
    </Fold>
  )
};

const Tree = ({ level = 0, icon, open, text, hot }) => {
  const pad = ["pl-[2px]", "pl-[16px]", "pl-[30px]", "pl-[44px]", "pl-[58px]"];
  return (
    <div className={`h-[19px] flex items-center ${hot ? "bg-[#fdf1a6] text-[#3a2a1a] pl-[3px] w-[258px]" : pad[level]}`}>
      {!hot && (
        <span className="w-[15px] shrink-0">
          {open && (
            <span className="w-[9px] h-[9px] bg-[#d8dce4] border border-[#eef0f4] flex items-center justify-center relative">
              <i className="w-[5px] h-[1px] bg-[#222]" />
              {open === "+" && <i className="absolute w-[1px] h-[5px] bg-[#222]" />}
            </span>
          )}
        </span>
      )}
      {treeIcons[icon]}
      <span className="ml-[4px] whitespace-nowrap">
        <J>{text}</J>
      </span>
    </div>
  );
};

const treeRows = [
  { level: 0, icon: "project", text: "プロジェクト", hot: true },
  { level: 0, icon: "unit", text: "ユニット構成図" },
  { level: 0, icon: "program", text: "プログラム", open: "-" },
  { level: 1, icon: "task", text: "初期" },
  { level: 1, icon: "task", text: "スキャン", open: "-" },
  { level: 2, icon: "main", text: "MAIN", open: "-" },
  { level: 3, icon: "pou", text: "ProgPou", open: "-" },
  { level: 4, icon: "local", text: "ローカルラベル" },
  { level: 4, icon: "doc", text: "プログラム本体" },
  { level: 1, icon: "task", text: "定周期" },
  { level: 1, icon: "task", text: "イベント" },
  { level: 1, icon: "task", text: "待機" },
  { level: 1, icon: "task", text: "実行タイプ指定なし" },
  { level: 1, icon: "unreg", text: "未登録プログラム" },
  { level: 0, icon: "fb", text: "FB/FUN" },
  { level: 0, icon: "label", text: "ラベル", open: "+" },
  { level: 0, icon: "device", text: "デバイス", open: "+" },
  { level: 0, icon: "param", text: "パラメータ", open: "+" }
];

const parts = [
  ["シーケンス命令", 0], ["接点命令", 1], ["結合命令", 1], ["出力命令", 1], ["シフト命令", 1],
  ["マスタコントロール命令", 1], ["終了命令", 1], ["停止命令", 1], ["無処理命令", 1], ["フェーズ処理命令", 1],
  ["基本命令", 0], ["比較演算命令", 1], ["算術演算命令", 1], ["データ転送命令", 1], ["論理演算命令", 1],
  ["データシフト命令", 1], ["ビット処理命令", 1], ["データ変換命令", 1], ["応用命令", 0], ["プログラム分岐命令", 1],
  ["プログラム実行制御命令", 1], ["ローテーション命令", 1], ["データ処理命令", 1], ["構造化命令", 1],
  ["データテーブル操作命令", 1], ["デバッグ・故障診断命令", 1], ["文字列処理命令", 1], ["データ制御命令", 1],
  ["ファイルレジスタ操作命令", 1], ["時計用命令", 1], ["プログラム制御用命令", 1], ["PID制御命令", 1],
  ["データリード/ライト命令", 1], ["浮動小数点命令", 1], ["乱数命令", 1], ["インデックスレジスタ操作命令", 1],
  ["特殊カウンタ命令", 1], ["特殊タイマ命令", 1], ["近回り制御命令", 1]
];

const partTabs = [
  ["お気に入り", "w-[61px]"],
  ["履歴", "w-[35px] ml-[2px]"],
  ["ユニット", "w-[45px] ml-[2px]"],
  ["ライブラリ", "w-[52px] ml-[2px]"]
];

const Arrow = ({ dir }) => {
  const cls = {
    up: "border-x-[5px] border-b-[7px] border-x-transparent border-b-[#9a9a9a]",
    down: "border-x-[5px] border-t-[7px] border-x-transparent border-t-[#9a9a9a]",
    left: "border-y-[5px] border-r-[7px] border-y-transparent border-r-[#9a9a9a]",
    right: "border-y-[5px] border-l-[7px] border-y-transparent border-l-[#9a9a9a]"
  };
  return <span className={`block ${cls[dir]}`} />;
};

const cols = [2, 3, 4, 5, 6, 7, 8, 9, 10, 11];

export default function App() {
  return (
    <div className="w-[1920px] h-[1080px] overflow-hidden flex flex-col bg-[#2a3a58] text-[12px] leading-none font-['Noto_Sans','Noto_Sans_CJK_JP',sans-serif] [font-feature-settings:'palt']">
      {/* title bar */}
      <div className="h-[23px] shrink-0 flex items-center bg-[#f5f2ec] text-[#1a1a1a]">
        <svg viewBox="0 0 16 16" width="16" height="16" className="block ml-[2px]">
          <rect width="16" height="16" fill="#d8232a" />
          <path d="M2 4h5M4 2v7M2 9h5M10 2v4h4M9 8h6M12 8v6M9 14h6" stroke="#fff" strokeWidth="1.2" fill="none" />
        </svg>
        <span className="ml-[5px] flex-1 tracking-[-.2px]">
          <J>MELSOFT GX Works3 (プロジェクト未設定) - [ProgPou [PRG] [LD] 2ステップ]</J>
        </span>
        <svg viewBox="0 0 10 10" width="10" height="10" className="block mr-[35px] -mt-[2px]">
          <path d="M0 5h10" stroke="#222" />
        </svg>
        <svg viewBox="0 0 10 10" width="10" height="10" className="block mr-[36px] -mt-[2px]">
          <path d="M.5 2.500h7v7h-7zM2.500 2.500v-2h7v7h-2" stroke="#222" fill="none" />
        </svg>
        <svg viewBox="0 0 12 12" width="12" height="12" className="block mr-[19px] -mt-[2px]">
          <path d="M1 1l10 10M11 1L1 11" stroke="#222" />
        </svg>
      </div>

      {/* menu bar */}
      <div className="h-[25px] shrink-0 flex items-center bg-gradient-to-b from-[#c8d2e2] to-[#b5c0d3] text-[#3d4b63] relative">
        <span className="absolute left-[3px]">
          <Grip />
        </span>
        {menus.map(([t, c]) => (
          <span key={t} className={`${c} whitespace-nowrap`}>
            <J>{t}</J>
          </span>
        ))}
        <span className="flex-1" />
        <span className="w-[7px] h-[2px] bg-[#222] mt-[8px] mr-[10px]" />
        <svg viewBox="0 0 10 10" width="10" height="10" className="block mr-[7px]">
          <path d="M.5 3.500h6v6h-6zM3 3.500V.5h6.500v6H7" stroke="#222" fill="none" />
        </svg>
        <span className="mr-[5px]">
          <CloseX c="#222" />
        </span>
      </div>

      {/* toolbars */}
      <div className="h-[79px] shrink-0 flex flex-col bg-[#9aa8c0]">
        <div className="h-[27px] flex items-center pl-[2px] gap-[2px]">
          <Bar
            className="w-[265px]"
            tools={["new", "open", "save", "print", "|", "clock", "|", "help"]}
            end={<Overflow />}
          >
            <Combo w="w-[100px]" />
            <span className="w-[2px]" />
          </Bar>
          <Bar
            className="w-[726px]"
            tools={[
              "cut", "copy", "paste", "undo", "redo", "|", "devBino", "termBino", "ladBino", "pageDis", "pageDis", "|",
              "rackOut", "rackIn", "rackMagG", "rackMagR", "rackMagP", "rackMagDis", "|", "rackDev", "rackDevDis", "|",
              "cmtArrow", "redGreen", "cmtArrow", "|", "monG", "monDis", "|", "monV", "|", "zoomIn", "zoomOut", "*fit"
            ]}
            end={<Overflow />}
          >
            <Combo w="w-[69px]">
              <span className="text-[#4a5568] ml-[2px]">121%</span>
            </Combo>
            <span className="w-[3px]" />
          </Bar>
          <Bar
            className="w-[534px]"
            tools={["rackLine", "|", "square", "check", "check", "greenRack", "rackBack", "disPlc", "clockX"]}
            end={<Overflow />}
          >
            <Combo w="w-[130px] ml-[1px]">最大: -------</Combo>
            <Combo w="w-[199px]" disabled />
          </Bar>
        </div>
        <div className="h-[26px] flex items-center pl-[2px] gap-[13px]">
          <Bar
            className="w-[697px]"
            tools={[
              "*tree", "*pcUnit", "ladTag", "|", "*chip", "|", "win1", "win2", "|", "bino", "winBino", "|", "devBino>",
              "devTable", "devRack", "devNet", "table", "|", "*gaugeBino", "gauge", "|", "listDis", "|", "folderEdit",
              "listPencil", "|", "iPencil", "ioCheck", "|", "toolOk", "|", "devEye>", "|", "tower>", "|", "winMag", "gPlc", "gBino", "gMem"
            ]}
            end={<Overflow />}
          />
          <Bar className="w-[137px]" tools={["gWin", "gChip", "gTable", "gBinoRack", "gEraser>"]} end={<Overflow />} />
        </div>
        <div className="h-[26px] w-[1151px] flex items-center bg-[#f4f7fc] border-y border-[#a2894a]">
          <Grip />
          <KeyGroup keys={[["c", "F5"], ["n", "sF5"], ["cd", "F6"], ["nd", "sF6"], ["coil", "F7"], ["fn", "F8"]]} />
          <Sep />
          <KeyGroup keys={[["h", "F9"], ["v", "sF9"], ["h", "cF9", true], ["", "cF10", true]]} />
          <Sep />
          <KeyGroup keys={[["ru", "sF7"], ["rd", "sF8"], ["nu", "aF7"], ["nd2", "aF8"]]} />
          <Sep />
          <KeyGroup keys={[["pp", "saF5"], ["ppd", "saF6"], ["pn", "saF7"], ["pnd", "saF8"]]} />
          <Sep />
          <KeyGroup keys={[["up", "aF5"], ["dn", "caF5"], ["diag", "caF10"]]} />
          <Sep />
          {["st", "|", "padEdit", "cmtPenA", "cmtPenB", "|", "cmtPenT", "|", "cmtLad", "|", "gStamp", "gDoc", "gMag", "gMag", "gIns", "gDel", "|",
            "ladGrid", "*ladGridPen", "magDoc", "magPen", "abUnder>", "devMag", "devArrow", "gPlus", "gMinus", "gLines", "gBub", "gCheck", "cmtLad", "|", "rackUp", "rackDown"].map((t, i) => (
            <Tool key={i} name={t} />
          ))}
          <span className="flex-1" />
          <div className="w-[10px] self-stretch bg-[#bac6d8] flex flex-col justify-end items-center pb-[3px]">
            <i className="w-[6px] h-[1px] bg-[#4a5568] mb-[1px]" />
            <span className="border-x-[3px] border-t-[3px] border-x-transparent border-t-[#4a5568]" />
          </div>
        </div>
      </div>

      {/* work area */}
      <div className="flex-1 min-h-0 flex">
        {/* navigation column */}
        <div className="w-[306px] shrink-0 flex flex-col">
          <div className="h-[822px] flex flex-col bg-white">
            <PanelTitle>ナビゲーション</PanelTitle>
            <div className="h-[29px] shrink-0 flex items-center bg-[#bac6d8] mx-[1px] pl-[6px]">
              <svg viewBox="0 0 22 20" width="22" height="20" className="block">
                <rect x="3" y="3" width="7" height="6" fill="#fff" stroke="#333" />
                <path d="M6 9v7h4" stroke="#333" fill="none" />
                <path d="M13 9l3-3 3 3zM13 13l3 3 3-3z" fill="#d0242c" />
                <path d="M12 6h3" stroke="#333" />
              </svg>
              <span className="w-[10px] h-[20px] flex justify-end">
                <i className="w-[1px] h-full bg-[#8795ab]" />
              </span>
              <svg viewBox="0 0 20 20" width="20" height="20" className="block">
                <rect x="3" y="4" width="7" height="6" fill="#fff" stroke="#333" />
                <path d="M10 7h6M6 10v5h10" stroke="#333" fill="none" />
              </svg>
              <span className="w-[4px] h-[20px] flex justify-center">
                <i className="w-[1px] h-full bg-[#8795ab]" />
              </span>
              <svg viewBox="0 0 20 20" width="20" height="20" className="block ml-[7px]">
                <path
                  d="M8 1h4l.5 2.400 2-1 2.800 2.800-1 2 2.500.8v4l-2.500.5 1 2.200-2.800 2.800-2-1L12 19H8l-.5-2.500-2 1-2.800-2.800 1-2L1 12V8l2.700-.8-1-2L5.500 2.400l2 1zM10 7a3 3 0 100 6 3 3 0 000-6z"
                  fill="#4a4d52"
                  fillRule="evenodd"
                />
              </svg>
              <span className="w-[4px] h-[20px] flex justify-center mr-[4px]">
                <i className="w-[1px] h-full bg-[#8795ab]" />
              </span>
              <Combo w="w-[99px]">
                <J>すべて</J>
              </Combo>
            </div>
            <div className="flex-1 min-h-0 mx-[2px] border border-t-0 border-[#7d9cc8] bg-[#354868] text-[#d6deeb]">
              {treeRows.map((r) => (
                <Tree key={r.text} {...r} />
              ))}
            </div>
            <div className="h-[3px] shrink-0" />
          </div>
          <div className="h-[20px] shrink-0 flex text-[#e6ebf3]">
            <div className="w-[64px] pl-[7px] flex items-center gap-[2px] whitespace-nowrap">
              <Ic k="pcUnit" size={16} />
              <span>接続先</span>
            </div>
            <div className="w-[88px] bg-white text-[#222] flex items-center pl-[5px] gap-[3px] whitespace-nowrap">
              <Ic k="tree" size={16} />
              <span>
                <J>ナビゲーション</J>
              </span>
            </div>
          </div>
          <div className="h-[6px] shrink-0" />
          <div className="flex-1 min-h-0 flex flex-col bg-white">
            <PanelTitle>クイック検索</PanelTitle>
            <div className="h-[25px] shrink-0 flex items-center pl-[10px] bg-[#bac6d8] mx-[2px] rounded-b-[2px] text-[#3d4b63] gap-[5px]">
              <span>
                <J>検索対象: すべて(A)</J>
              </span>
              <span className="border-x-[3px] border-t-[3px] border-x-transparent border-t-[#3d4b63]" />
            </div>
            <div className="flex-1 min-h-0 mx-[1px] bg-[#efefef] flex items-center pl-[10px] pt-[3px] gap-[4px]">
              <div className="w-[267px] h-[21px] bg-white border border-[#8a8a8a] rounded-[2px] flex items-center justify-end pr-[3px]">
                <svg viewBox="0 0 10 6" width="9" height="5" className="block">
                  <path d="M1 1l4 4 4-4" stroke="#555" fill="none" />
                </svg>
              </div>
              <svg viewBox="0 0 20 20" width="18" height="18" className="block">
                <circle cx="12" cy="7" r="5.500" fill="#e7f3ff" stroke="#9fb8d0" strokeWidth="1.500" />
                <path d="M8 11l-6 6" stroke="#e9a97a" strokeWidth="2.500" />
              </svg>
            </div>
          </div>
        </div>

        {/* editor column */}
        <div className="w-[1194px] shrink-0 ml-[5px] flex flex-col pb-[2px]">
          <div className="h-[23px] shrink-0 flex">
            <div className="w-[218px] pl-[4px] flex items-center text-[#dfe6f2] tracking-[-.2px]">
              <span className="mr-[4px]">{treeIcons.local}</span>
              <span className="whitespace-nowrap">
                <J>ProgPou [PRG] [ローカルラベル設...</J>
              </span>
            </div>
            <div className="w-[190px] ml-[2px] bg-gradient-to-b from-[#fdf5dd] to-[#fde6ae] pl-[3px] flex items-center text-[#1f2d45] tracking-[-.2px]">
              <span className="mr-[6px]">{treeIcons.doc}</span>
              <span className="whitespace-nowrap">
                <J>ProgPou [PRG] [LD] 2ステップ</J>
              </span>
              <span className="ml-[6px]">
                <CloseX c="#5b6270" />
              </span>
            </div>
            <span className="flex-1" />
            <div className="flex items-center gap-[8px] pr-[2px] pb-[3px]">
              <span className="border-y-[5px] border-r-[5px] border-y-transparent border-r-[#ccd4e0]" />
              <span className="border-y-[5px] border-l-[5px] border-y-transparent border-l-[#ccd4e0]" />
              <span className="border-x-[5px] border-t-[6px] border-x-transparent border-t-[#ccd4e0]" />
            </div>
          </div>
          <div className="flex-1 min-h-0 bg-[#fde5a8] pt-[3px] pb-[3px] pr-[3px] flex flex-col">
            <div className="flex-1 min-h-0 flex flex-col bg-white border-l-[3px] border-t-[3px] border-[#858585]">
              <div className="flex-1 min-h-0 flex pt-[1px] pl-[2px]">
                <div className="w-[1166px] shrink-0 flex flex-col">
                  {/* column header */}
                  <div className="h-[21px] shrink-0 flex text-[#111]">
                    <div className="w-[73px] bg-[#dbe9fb] flex items-center pl-[3px] text-[13px] border-r border-dotted border-white">
                      <J>書込み</J>
                    </div>
                    <div className="w-[55px] bg-[#dbe9fb] flex items-center justify-end pr-[7px]">
                      <span className="border-x-[3px] border-t-[3px] border-x-transparent border-t-[#6a7fa8]" />
                    </div>
                    {[1, ...cols, 12].map((n) => (
                      <div
                        key={n}
                        className="w-[84px] shrink-0 flex items-center justify-center bg-gradient-to-b from-white to-[#c8defb] border-r border-b border-[#6a97d0]"
                      >
                        {n}
                      </div>
                    ))}
                  </div>
                  {/* first rung */}
                  <div className="h-[103px] shrink-0 flex text-[#111]">
                    <div className="w-[17px] shrink-0 flex items-center pl-[4px] bg-gradient-to-b from-white to-[#c8defb] border-r border-b border-[#6a97d0]">1</div>
                    <div className="w-[56px] shrink-0" />
                    <div className="w-[55px] shrink-0 bg-[#add8e6] flex items-center justify-end pr-[3px]">(0)</div>
                    <div className="w-[84px] shrink-0 bg-[#add8e6] border-[3px] border-[#0000a0] relative">
                      <div className="h-[1px] bg-black mt-[19px]" />
                      <span className="absolute left-0 bottom-0 border-l-[8px] border-t-[9px] border-l-transparent border-t-[#1e90e8]" />
                    </div>
                    {cols.map((n) => (
                      <div key={n} className="w-[84px] shrink-0 px-[1px]">
                        <div className="h-[1px] bg-black mt-[22px]" />
                      </div>
                    ))}
                    <div className="w-[84px] shrink-0 border-r-[1.5px] border-black">
                      <div className="h-[45px] flex items-center">
                        <i className="w-[18px] h-[1px] bg-black" />
                        <span className="h-[15px] w-[4px] border-l border-y border-black" />
                        <span className="font-['Liberation_Sans',sans-serif]">END</span>
                        <span className="w-[16px]" />
                        <span className="h-[15px] w-[4px] border-r border-y border-black" />
                        <i className="flex-1 h-[1px] bg-black" />
                      </div>
                    </div>
                  </div>
                  <div className="flex-1" />
                </div>
                <div className="w-[18px] shrink-0 bg-[#efefef] flex flex-col items-center">
                  <span className="w-[9px] h-[9px] rounded-full bg-[#8a8a8a] mt-[1px]" />
                  <span className="mt-[6px]">
                    <Arrow dir="up" />
                  </span>
                  <span className="flex-1" />
                  <span className="mb-[4px]">
                    <Arrow dir="down" />
                  </span>
                </div>
              </div>
              <div className="h-[20px] shrink-0 bg-[#efefef] flex items-center pl-[8px] pr-[20px]">
                <Arrow dir="left" />
                <span className="flex-1" />
                <Arrow dir="right" />
                <span className="w-[8px] h-[8px] bg-[#9a9a9a] ml-[8px]" />
              </div>
            </div>
          </div>
        </div>

        {/* parts column */}
        <div className="w-[410px] shrink-0 ml-[5px] flex flex-col bg-white">
          <PanelTitle>部品選択</PanelTitle>
          <div className="h-[55px] shrink-0 flex flex-col bg-[#bac6d8] border-b-2 border-[#6f7d94]">
            <div className="h-[27px] flex items-center pl-[3px]">
              <div className="w-[199px] h-[23px] bg-white border border-[#6f7d94] flex items-center pl-[3px] text-[#6a7488]">(部品検索)</div>
              {["pBinoL", "pBinoR", "pBino"].map((k, i) => (
                <span key={i} className="w-[22px] flex justify-center">
                  <Ic k={k} size={18} />
                </span>
              ))}
              <Sep />
              <span className="w-[22px] flex justify-center"><Ic k="pGlobe" size={18} /></span>
              <Sep />
              <span className="w-[30px] flex justify-center"><Ic k="pAdd" size={18} /></span>
              <span className="w-[22px] flex justify-center"><Ic k="pDel" size={18} /></span>
              <Sep />
              <span className="w-[22px] flex justify-center"><Ic k="pCopy" size={18} /></span>
            </div>
            <div className="h-[1px] bg-[#eef1f6] mx-[3px]" />
            <div className="flex-1 flex items-center pl-[3px]">
              <span className="w-[22px] flex justify-center"><Ic k="pStar" size={18} /></span>
              <span className="w-[22px] flex justify-center"><Ic k="pFolder" size={18} /></span>
              <span className="w-[22px] flex justify-center"><CloseX c="#7d838e" size={15} /></span>
              <Sep />
              <span className="w-[26px] flex justify-center"><Ic k="pWin" size={18} /></span>
            </div>
          </div>
          <div className="flex-1 min-h-0 flex flex-col border-t-2 border-[#fbbf6e] border-l-2 border-l-[#fde5a8] mt-[4px]">
            <div className="h-[22px] shrink-0 flex bg-[#efefef] text-[#222]">
              <span className="w-[143px] flex items-center pl-[9px] text-[13px]">表示対象:</span>
              <div className="flex-1 bg-white flex items-center pl-[11px] pr-[4px] mr-[1px]">
                <span className="flex-1">
                  <J>全て</J>
                </span>
                <svg viewBox="0 0 10 6" width="9" height="5" className="block">
                  <path d="M1 1l4 4 4-4" stroke="#555" fill="none" />
                </svg>
              </div>
            </div>
            <div className="h-[741px] shrink-0 flex ml-[1px] border-l border-[#6a97d0]">
              <div className="w-[385px] shrink-0 bg-[#d3e5fd] text-[#34465f]">
                {parts.map(([t, sub]) => (
                  <div key={t} className={`h-[19px] flex items-center whitespace-pre border-b border-[#2d4468] ${sub ? "pl-[15px]" : "pl-[3px]"}`}>
                    <span>
                      <J>{t}</J>
                    </span>
                  </div>
                ))}
              </div>
              <div className="flex-1 bg-[#efefef] flex justify-center pt-[18px]">
                <span className="w-[3px] h-[300px] bg-[#8a8a8a]" />
              </div>
            </div>
            <div className="h-[4px] shrink-0 bg-[#2f5f9e] border-b border-[#2d4468]" />
            <div className="h-[57px] shrink-0 bg-[#d3e5fd] border border-[#4a7fc4]" />
            <div className="h-[23px] shrink-0 flex mt-[1px] bg-gradient-to-b from-white to-[#cfdff8] text-[#222]">
              <div className="w-[62px] flex items-center justify-center bg-gradient-to-b from-[#fde9cf] to-[#fcb670] border-b-2 border-[#1f55b0]">部品一覧</div>
              {partTabs.map(([t, c]) => (
                <div key={t} className={`${c} flex items-center justify-center whitespace-nowrap bg-gradient-to-b from-[#e2ecfc] to-[#c5d9f8] border-r-2 border-b-2 border-[#1f55b0] border-l border-l-[#1f55b0]`}>
                  <span>
                    <J>{t}</J>
                  </span>
                </div>
              ))}
            </div>
          </div>
        </div>
      </div>

      {/* status bar */}
      <div className="h-[20px] shrink-0 flex items-center text-[#dde4ef]">
        <span className="w-[1016px]" />
        {[
          ["w-[328px]", ""],
          ["w-[113px] pl-[5px]", "R08"],
          ["w-[155px] pl-[7px]", "自局"],
          ["w-[163px] pl-[6px]", "0/2ステップ"],
          ["w-[74px] pl-[6px]", "上書き"],
          ["w-[33px] pl-[6px] text-[#5e6b82]", "CAP"],
          ["w-[38px] pl-[5px]", "NUM"]
        ].map(([c, t], i) => (
          <span key={i} className={`${c} h-[16px] flex items-center border-l border-[#c9d2df]`}>
            <span>
              <J>{t}</J>
            </span>
          </span>
        ))}
      </div>
    </div>
  );
}
